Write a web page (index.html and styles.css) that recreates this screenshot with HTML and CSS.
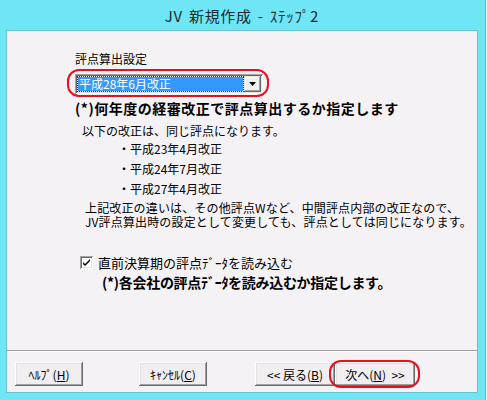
FILE: index.html
```html
<!DOCTYPE html>
<html lang="ja">
<head>
  <meta charset="UTF-8">
  <title>JV 新規作成 - ｽﾃｯﾌﾟ2</title>
  <link rel="stylesheet" href="styles.css">
</head>
<body>
  <div class="window">
    <div class="titlebar">JV 新規作成 - ｽﾃｯﾌﾟ2</div>

    <div class="client">
      <div class="content">
        <div class="field-label">評点算出設定</div>

        <div class="combo marked">
          <span class="combo-value">平成28年6月改正</span>
          <span class="combo-arrow">
            <svg width="7" height="4" viewBox="0 0 7 4"><path d="M0 0h7L3.5 4z" fill="#000"/></svg>
          </span>
        </div>

        <p class="note">(*)何年度の経審改正で評点算出するか指定します</p>
        <p class="text">以下の改正は、同じ評点になります。</p>

        <ul class="revisions">
          <li>・平成23年4月改正</li>
          <li>・平成24年7月改正</li>
          <li>・平成27年4月改正</li>
        </ul>

        <p class="para">上記改正の違いは、その他評点Wなど、中間評点内部の改正なので、<br>JV評点算出時の設定として変更しても、評点としては同じになります。</p>

        <div class="check">
          <span class="check-box">
            <svg width="9" height="9" viewBox="0 0 9 9"><path d="M1 4l2 2 5-5v2L3 8 1 6z" fill="#000"/></svg>
          </span>
          直前決算期の評点ﾃﾞｰﾀを読み込む
        </div>
        <p class="note sub">(*)各会社の評点ﾃﾞｰﾀを読み込むか指定します。</p>
      </div>

      <div class="footer">
        <button class="btn help">ﾍﾙﾌﾟ(<u>H</u>)</button>
        <button class="btn cancel">ｷｬﾝｾﾙ(<u>C</u>)</button>
        <button class="btn back">&lt;&lt; 戻る(<u>B</u>)</button>
        <button class="btn next marked">次へ(<u>N</u>) &nbsp;&gt;&gt;</button>
      </div>
    </div>
  </div>
</body>
</html>
```

FILE: styles.css
```css
body {
  margin: 0;
  font-family: "Noto Sans CJK JP", "Liberation Sans", sans-serif;
  font-size: 12px;
  color: #000;
}
.window {
  width: 486px;
  height: 400px;
  box-sizing: border-box;
  padding: 0 7px 7px 6px;
  background-color: #6ee6f6;
  border-right: 1px solid #8aa3a8;
}
.titlebar {
  height: 30px;
  line-height: 32px;
  text-align: center;
  font-size: 15px;
  color: #1e2b2b;
  letter-spacing: 0.7px;
  word-spacing: 2px;
}
.client {
  height: 363px;
  box-sizing: border-box;
  border: 1px solid #67c3cd;
  background-color: #f5f2f6;
  display: flex;
  flex-direction: column;
}
.content {
  height: 320px;
  box-sizing: border-box;
  padding: 21px 0 0 68px;
  border-bottom: 1px solid #a0a0a0;
}
.field-label {
  line-height: 14px;
}
.marked {
  position: relative;
}
.marked::after {
  content: "";
  position: absolute;
  border: 2px solid #e8101a;
  border-radius: 12px;
}
.combo {
  margin-top: 8px;
  width: 188px;
  height: 20px;
  box-sizing: border-box;
  display: flex;
  align-items: center;
  padding: 2px;
  background: #fff;
  box-shadow: inset 1px 1px #a0a0a0, inset -1px -1px #fff, inset 2px 2px #696969, inset -2px -2px #e3e3e3;
}
.combo::after {
  top: -5px;
  left: -8px;
  right: -6px;
  bottom: -3px;
}
.combo-value {
  flex: 1;
  height: 14px;
  margin: 0 1px;
  padding-left: 1px;
  line-height: 14px;
  font-size: 12px;
  background: #3399ff;
  color: #fff;
  outline: 1px dotted #333;
  white-space: nowrap;
}
.combo-arrow {
  width: 17px;
  height: 16px;
  box-sizing: border-box;
  display: flex;
  align-items: center;
  justify-content: center;
  background: #f0f0f0;
  box-shadow: inset -1px -1px #696969, inset 1px 1px #e3e3e3, inset -2px -2px #a0a0a0, inset 2px 2px #fff;
}
.note {
  margin: 6px 0 0 0;
  font-size: 14px;
  line-height: 16px;
  font-weight: bold;
  letter-spacing: 0.5px;
}
.text {
  margin: 8px 0 0 7px;
  line-height: 14px;
}
.revisions {
  list-style: none;
  margin: 4px 0 0 43px;
  padding: 0;
}
.revisions li {
  line-height: 14px;
  margin-bottom: 6px;
}
.para {
  margin: -1px 0 0 10px;
  line-height: 14px;
  letter-spacing: 0.15px;
}
.check {
  margin: 26px 0 0 5px;
  display: flex;
  align-items: center;
  gap: 5px;
  font-size: 13px;
  line-height: 15px;
}
.check-box {
  width: 13px;
  height: 13px;
  box-sizing: border-box;
  display: flex;
  align-items: center;
  justify-content: center;
  background: #fff;
  box-shadow: inset 1px 1px #a0a0a0, inset -1px -1px #fff, inset 2px 2px #696969, inset -2px -2px #e3e3e3;
}
.note.sub {
  margin: 4px 0 0 27px;
  letter-spacing: -0.3px;
}
.footer {
  flex: 1;
  display: flex;
  align-items: flex-start;
  padding: 10px 0 0 8px;
  border-top: 1px solid #fff;
}
.btn {
  height: 24px;
  padding: 0;
  font-family: inherit;
  font-size: 12px;
  color: #000;
  border: none;
  background: #f0eef0;
  box-shadow: inset -1px -1px #696969, inset 1px 1px #fff, inset -2px -2px #a0a0a0, inset 2px 2px #e3e3e3;
}
.help {
  width: 68px;
}
.cancel {
  width: 68px;
  margin-left: 56px;
}
.back {
  width: 80px;
  margin-left: 48px;
}
.next {
  width: 80px;
}
.next::after {
  top: -2px;
  left: -6px;
  right: -5px;
  bottom: -2px;
}
```
